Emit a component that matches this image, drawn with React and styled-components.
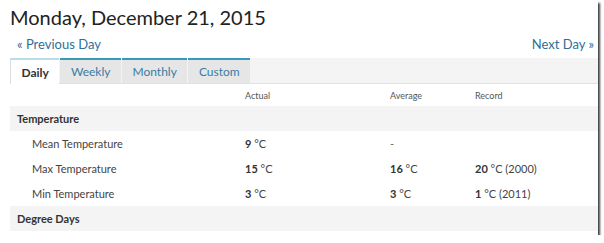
import React from "react";
import styled, { createGlobalStyle } from "styled-components";

const GlobalStyle = createGlobalStyle`
  body {
    margin: 0;
    background: #fff;
    font-family: "Lato", "Open Sans", sans-serif;
  }
`;

const tabs = ["Daily", "Weekly", "Monthly", "Custom"];

const rows = [
  { type: "section", label: "Temperature" },
  { label: "Mean Temperature", actual: ["9", "°C"], average: null, record: null },
  { label: "Max Temperature", actual: ["15", "°C"], average: ["16", "°C"], record: ["20", "°C (2000)"] },
  { label: "Min Temperature", actual: ["3", "°C"], average: ["3", "°C"], record: ["1", "°C (2011)"] },
  { type: "section", label: "Degree Days" },
];

const renderValue = (value, dash) => {
  if (!value) return dash ? <Dash>-</Dash> : null;
  return (
    <>
      <b>{value[0]}</b> {value[1]}
    </>
  );
};

const App = () => {
  return (
    <>
      <GlobalStyle />
      <Frame>
        <Title>Monday, December 21, 2015</Title>
        <NavRow>
          <NavLink>« Previous Day</NavLink>
          <NavLink>Next Day »</NavLink>
        </NavRow>
        <TabBar>
          {tabs.map((t, i) => (
            <Tab key={t} active={i === 0}>
              {t}
            </Tab>
          ))}
        </TabBar>
        <Table>
          <HeadRow>
            <span />
            <span>Actual</span>
            <span>Average</span>
            <span>Record</span>
          </HeadRow>
          {rows.map((r) =>
            r.type === "section" ? (
              <SectionRow key={r.label}>
                <span>{r.label}</span>
              </SectionRow>
            ) : (
              <DataRow key={r.label}>
                <Label>{r.label}</Label>
                <Value>{renderValue(r.actual)}</Value>
                <Value>{renderValue(r.average, true)}</Value>
                <Value>{renderValue(r.record)}</Value>
              </DataRow>
            )
          )}
        </Table>
      </Frame>
    </>
  );
};

const Frame = styled.div`
  width: 598px;
  height: 235px;
  overflow: hidden;
  background: #fff;
  box-shadow: 2px 3px 2px rgba(0, 0, 0, 0.75);
  padding-left: 10px;
  box-sizing: border-box;
`;

const Title = styled.h1`
  margin: 0;
  padding-top: 4px;
  font-size: 20px;
  font-weight: 400;
  color: #222;
  line-height: 26px;
`;

const NavRow = styled.div`
  display: flex;
  justify-content: space-between;
  padding: 5px 4px 0 7px;
  height: 24px;
  box-sizing: border-box;
`;

const NavLink = styled.a`
  font-size: 13px;
  color: #2e6f99;
  line-height: 18px;
`;

const TabBar = styled.div`
  display: flex;
  margin-top: 4px;
  height: 26px;
  background: #f4f4f4;
  border-bottom: 1px solid #e2e2e2;
  box-sizing: border-box;
`;

const Tab = styled.div`
  display: flex;
  align-items: center;
  padding: 0 10.5px;
  margin-right: 1px;
  font-size: 12px;
  box-sizing: border-box;
  border-top: 2px solid ${({ active }) => (active ? "#b9dcea" : "#3a98bb")};
  background: ${({ active }) => (active ? "#fff" : "#e6e6e6")};
  color: ${({ active }) => (active ? "#333" : "#3a7ca5")};
  font-weight: ${({ active }) => (active ? 700 : 400)};
  border-left: ${({ active }) => (active ? "1px solid #ddd" : "none")};
  margin-bottom: ${({ active }) => (active ? "-1px" : "0")};
`;

const Table = styled.div`
  font-size: 11px;
  color: #333;
`;

const grid = `
  display: grid;
  grid-template-columns: 235px 145px 85px 1fr;
  align-items: center;
`;

const HeadRow = styled.div`
  ${grid}
  height: 22px;
  font-size: 9px;
  color: #555;
`;

const SectionRow = styled.div`
  height: 25px;
  display: flex;
  align-items: center;
  padding-left: 7px;
  background: #f4f4f4;
  font-weight: 700;
  font-size: 11px;
  color: #333;
`;

const DataRow = styled.div`
  ${grid}
  height: 25px;
`;

const Label = styled.span`
  padding-left: 22px;
  color: #444;
`;

const Value = styled.span`
  color: #444;
  & b {
    color: #333;
  }
`;

const Dash = styled.span`
  color: #666;
`;

export default App;
